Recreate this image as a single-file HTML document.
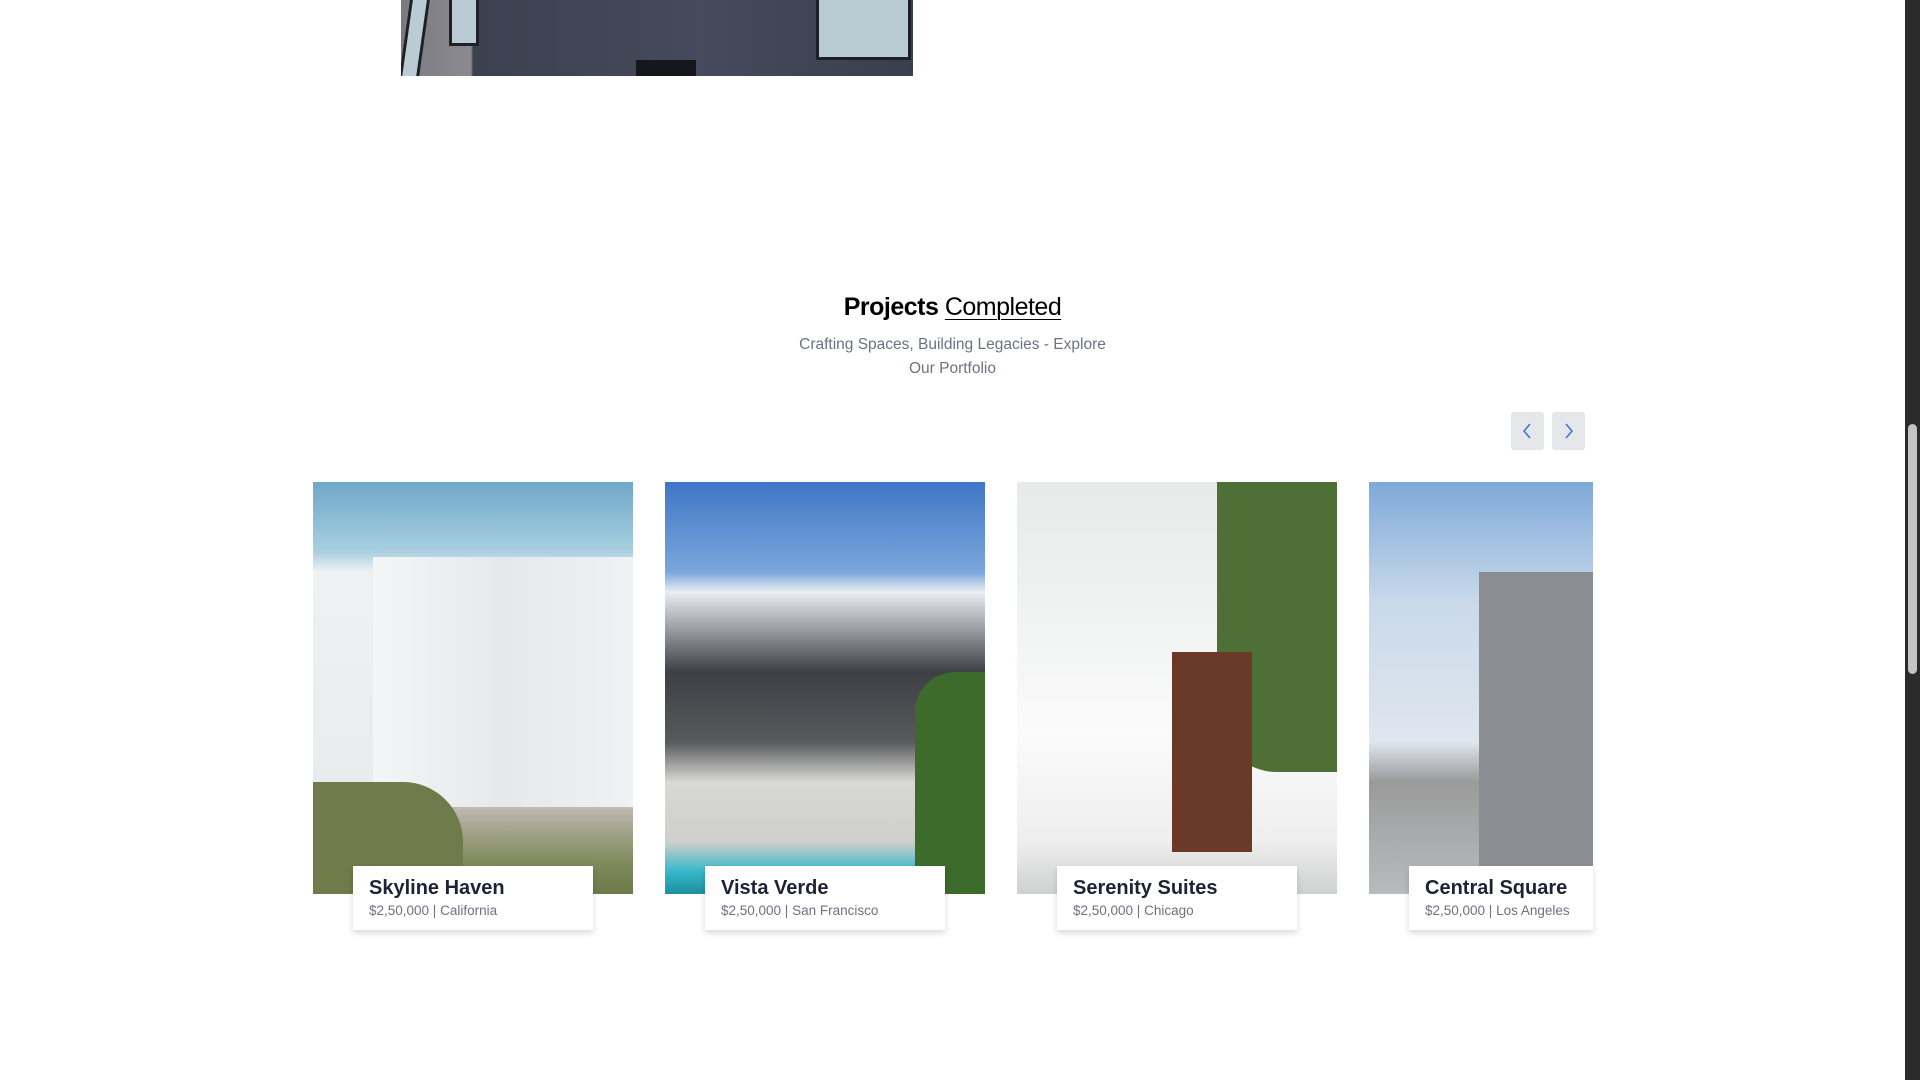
<!DOCTYPE html>
<html><head><style>
*{margin:0;padding:0;box-sizing:border-box}
body{width:1920px;height:1080px;background:#fff;position:relative;overflow:hidden;font-family:"Liberation Sans",sans-serif}
.abs{position:absolute}
.top{left:401px;top:0;width:512px;height:76px;overflow:hidden;background:linear-gradient(90deg,#7a7a80 0,#8a8a90 70px,#3c4150 72px,#454a5c 300px,#3a3f4f 512px)}
.win{position:absolute;background:#b9ccd3;border:3px solid #1d2027}
h2{position:absolute;left:0;width:1905px;top:293px;text-align:center;font-size:25px;color:#000;font-weight:bold;letter-spacing:-0.5px}
h2 span{font-weight:normal;text-decoration:underline;text-underline-offset:4px;text-decoration-thickness:1px}
.sub{position:absolute;left:0;width:1905px;top:333px;text-align:center;font-size:15.5px;line-height:24px;color:#6b7280}
.btn{position:absolute;top:412px;width:33px;height:38px;background:#e5e7eb;border-radius:3px}
.card{position:absolute;top:482px;width:320px;height:412px;overflow:hidden}
.lab{position:absolute;top:866px;width:240px;height:64px;background:#fff;box-shadow:0 3px 6px rgba(0,0,0,.15);padding:10px 16px}
.lab b{display:block;font-size:20px;color:#1e2235;line-height:24px}
.lab i{display:block;font-style:normal;font-size:13.5px;color:#6b7280;margin-top:3px}
</style></head><body>
<div class="abs top">
<div class="win" style="left:4px;top:-10px;width:20px;height:90px;transform:skewX(-8deg)"></div>
<div class="win" style="left:48px;top:-4px;width:30px;height:50px"></div>
<div class="win" style="left:415px;top:-4px;width:95px;height:64px"></div>
<div class="abs" style="left:235px;top:60px;width:60px;height:20px;background:#15171c"></div>
</div>
<h2>Projects <span>Completed</span></h2>
<div class="sub">Crafting Spaces, Building Legacies - Explore<br>Our Portfolio</div>
<div class="btn" style="left:1511px"><svg width="33" height="38"><path d="M19 12 L13 19 L19 26" stroke="#3b6fe0" stroke-width="1.5" fill="none"/></svg></div>
<div class="btn" style="left:1552px"><svg width="33" height="38"><path d="M14 12 L20 19 L14 26" stroke="#3b6fe0" stroke-width="1.5" fill="none"/></svg></div>

<div class="card" style="left:313px;background:linear-gradient(180deg,#6fa8c8 0,#a9cfe0 70px,#eef2f3 90px,#e9ecee 300px,#b9b4a8 330px,#7f8a5c 380px,#6d7a49 412px)">
<div class="abs" style="left:60px;top:75px;width:260px;height:250px;background:linear-gradient(90deg,#f4f5f6,#e6e8ea 50%,#f0f1f2)"></div>
<div class="abs" style="left:0;top:300px;width:150px;height:112px;background:#6f7b4a;border-radius:0 60px 0 0"></div></div>
<div class="card" style="left:665px;background:linear-gradient(180deg,#3f76c6 0,#7aa6dc 90px,#eaeef2 110px,#3d3f44 190px,#585a5e 260px,#d8d8d4 300px,#cfcfcb 360px,#35b7c9 390px,#1d8fa0 412px)">
<div class="abs" style="right:0;top:190px;width:70px;height:222px;background:#3d6b2b;border-radius:40px 0 0 0"></div></div>
<div class="card" style="left:1017px;background:linear-gradient(180deg,#e8eaea 0,#f2f3f3 150px,#fbfbfb 250px,#eeeeee 360px,#cfd0d0 412px)">
<div class="abs" style="right:0;top:0;width:120px;height:290px;background:#4e6f35;border-radius:0 0 0 60px"></div>
<div class="abs" style="left:155px;top:170px;width:80px;height:200px;background:#6a3a28"></div></div>
<div class="card" style="left:1369px;width:224px;background:linear-gradient(180deg,#7ea9d9 0,#c9d9ea 120px,#dfe6ee 260px,#9a9a9a 300px,#b8bcbe 412px)">
<div class="abs" style="left:110px;top:90px;width:114px;height:322px;background:#8a8e93"></div></div>

<div class="lab" style="left:353px"><b>Skyline Haven</b><i>$2,50,000 | California</i></div>
<div class="lab" style="left:705px"><b>Vista Verde</b><i>$2,50,000 | San Francisco</i></div>
<div class="lab" style="left:1057px"><b>Serenity Suites</b><i>$2,50,000 | Chicago</i></div>
<div class="lab" style="left:1409px;width:184px;overflow:hidden;white-space:nowrap"><b>Central Square</b><i>$2,50,000 | Los Angeles</i></div>

<div class="abs" style="left:1905px;top:0;width:15px;height:1080px;background:#2b2b2b"></div>
<div class="abs" style="left:1908px;top:424px;width:9px;height:250px;background:#c4c4c4;border-radius:5px"></div>
</body></html>
